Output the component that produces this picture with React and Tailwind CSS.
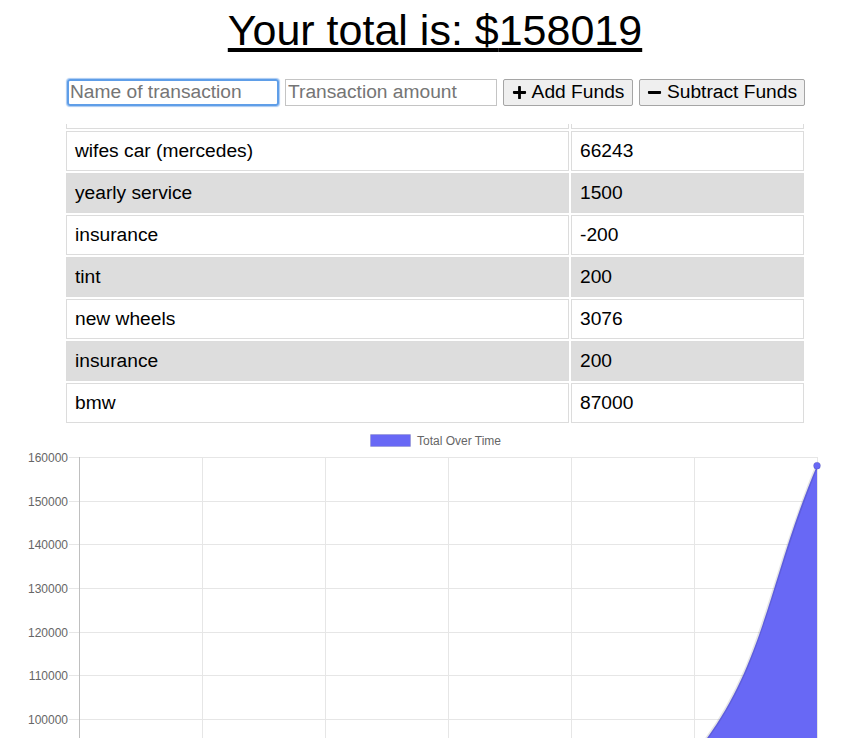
import React, { useEffect, useRef } from 'react';
import { FaPlus, FaMinus } from 'react-icons/fa';

const transactions = [
  { name: 'wifes car (mercedes)', value: 66243 },
  { name: 'yearly service', value: 1500 },
  { name: 'insurance', value: -200 },
  { name: 'tint', value: 200 },
  { name: 'new wheels', value: 3076 },
  { name: 'insurance', value: 200 },
  { name: 'bmw', value: 87000 },
];

// chart geometry (relative to the svg)
const TOP = 32;
const STEP_Y = 43.65;
const LEFT = 79;
const STEP_X = 123;
const yOf = (v) => TOP + ((160000 - v) / 10000) * STEP_Y;
const BOTTOM = yOf(80000);

const Chart = () => {
  // running total, oldest first
  const totals = [];
  let sum = 0;
  [...transactions].reverse().forEach((t) => {
    sum += t.value;
    totals.push(sum);
  });
  const pts = totals.map((v, i) => ({ x: LEFT + i * STEP_X, y: yOf(v) }));

  // chart.js style spline, tension 0.4
  const ctrl = pts.map((p, i) => {
    const prev = pts[i - 1] || p;
    const next = pts[i + 1] || p;
    const d01 = Math.hypot(p.x - prev.x, p.y - prev.y);
    const d12 = Math.hypot(next.x - p.x, next.y - p.y);
    const s01 = d01 / (d01 + d12) || 0;
    const s12 = d12 / (d01 + d12) || 0;
    const fa = 0.4 * s01;
    const fb = 0.4 * s12;
    return {
      px: p.x - fa * (next.x - prev.x),
      py: p.y - fa * (next.y - prev.y),
      nx: p.x + fb * (next.x - prev.x),
      ny: p.y + fb * (next.y - prev.y),
    };
  });

  let line = `M${pts[0].x},${pts[0].y}`;
  for (let i = 1; i < pts.length; i++) {
    line += ` C${ctrl[i - 1].nx},${ctrl[i - 1].ny} ${ctrl[i].px},${ctrl[i].py} ${pts[i].x},${pts[i].y}`;
  }
  const last = pts[pts.length - 1];
  const area = `${line} L${last.x},${BOTTOM} L${pts[0].x},${BOTTOM} Z`;

  const yTicks = [160000, 150000, 140000, 130000, 120000, 110000, 100000];

  return (
    <svg width="848" height="313" className="block">
      {/* legend */}
      <rect x="370.5" y="9.5" width="40" height="12" fill="#6868f5" stroke="rgba(0,0,0,0.1)" />
      <text x="417" y="19.5" fontSize="12" fill="#666" fontFamily="Liberation Sans, Arial, sans-serif">
        Total Over Time
      </text>

      {/* grid */}
      {yTicks.map((t) => (
        <g key={t}>
          <line x1="69" x2="817" y1={Math.round(yOf(t)) + 0.5} y2={Math.round(yOf(t)) + 0.5} stroke="#e6e6e6" />
          <text
            x="68"
            y={Math.round(yOf(t)) + 4.5}
            fontSize="12"
            textAnchor="end"
            fill="#666"
            fontFamily="Liberation Sans, Arial, sans-serif"
          >
            {t}
          </text>
        </g>
      ))}
      {pts.map((p, i) => (
        <line
          key={i}
          x1={p.x + 0.5}
          x2={p.x + 0.5}
          y1={TOP}
          y2={BOTTOM + 10}
          stroke={i === 0 ? '#bfbfbf' : '#e6e6e6'}
        />
      ))}

      {/* data */}
      <path d={area} fill="#6868f5" />
      <path d={line} fill="none" stroke="rgba(0,0,0,0.1)" strokeWidth="3" />
      <circle cx={last.x} cy={last.y} r="3.5" fill="#6868f5" stroke="rgba(0,0,0,0.1)" />
    </svg>
  );
};

export default function App() {
  const listRef = useRef(null);

  useEffect(() => {
    if (listRef.current) listRef.current.scrollTop = listRef.current.scrollHeight;
  }, []);

  const total = transactions.reduce((a, t) => a + t.value, 0);

  return (
    <div className="bg-white text-black font-['Liberation_Sans',Arial,sans-serif] overflow-hidden">
      <h1 className="pl-[22px] pt-[5px] text-center text-[43px] leading-[50px] underline">
        Your total is: ${total}
      </h1>

      {/* form */}
      <div className="ml-[67px] mt-[24px] flex items-center gap-[6px] text-[19.2px]">
        <input
          type="text"
          placeholder="Name of transaction"
          className="w-[212px] h-[27px] px-[1px] border-2 border-[#5f9ee8] rounded-[3px] shadow-[0_0_1px_1px_#a8c9f2] outline-none placeholder:text-[#757575]"
        />
        <input
          type="number"
          placeholder="Transaction amount"
          className="w-[212px] h-[27px] px-[2px] border border-[#c4c4c4] outline-none placeholder:text-[#757575]"
        />
        <button className="w-[130px] h-[27px] flex items-center justify-center gap-[5px] bg-[#efefef] border border-[#a5a5a5] rounded-[2px]">
          <FaPlus className="w-[15px] h-[15px]" />
          Add Funds
        </button>
        <button className="w-[166px] h-[27px] flex items-center justify-center gap-[5px] bg-[#efefef] border border-[#a5a5a5] rounded-[2px]">
          <FaMinus className="w-[15px] h-[15px]" />
          Subtract Funds
        </button>
      </div>

      {/* transactions, scrolled to the end */}
      <div ref={listRef} className="ml-[64px] mt-[18px] w-[741px] h-[301px] overflow-hidden">
        <div className="grid grid-cols-[503px_233px] gap-[2px] p-[2px] text-[19.2px]">
          <div className="h-[40px] border border-[#dcdcdc]" />
          <div className="h-[40px] border border-[#dcdcdc]" />
          {transactions.map((t, i) => (
            <React.Fragment key={i}>
              <div
                className={`h-[40px] border border-[#dcdcdc] px-[8px] pt-[1px] flex items-center ${
                  i % 2 === 1 ? 'bg-[#dddddd]' : 'bg-white'
                }`}
              >
                {t.name}
              </div>
              <div
                className={`h-[40px] border border-[#dcdcdc] px-[8px] pt-[1px] flex items-center ${
                  i % 2 === 1 ? 'bg-[#dddddd]' : 'bg-white'
                }`}
              >
                {t.value}
              </div>
            </React.Fragment>
          ))}
        </div>
      </div>

      <Chart />
    </div>
  );
}
